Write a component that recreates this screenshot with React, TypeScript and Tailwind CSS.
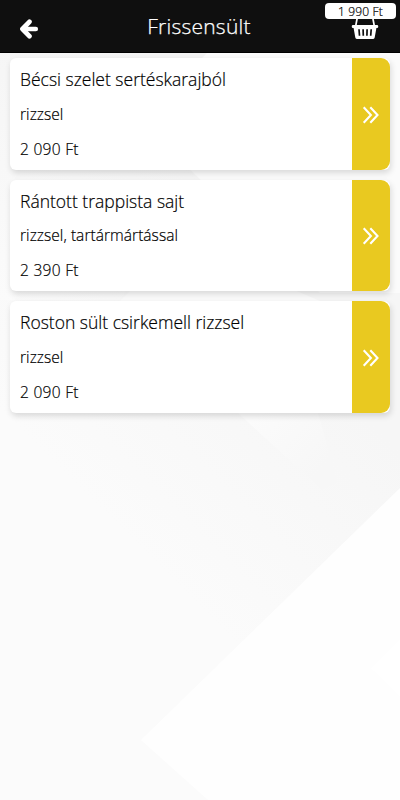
type Dish = {
  name: string;
  side: string;
  price: string;
};

const dishes: Dish[] = [
  {
    name: "Bécsi szelet sertéskarajból",
    side: "rizzsel",
    price: "2 090 Ft",
  },
  {
    name: "Rántott trappista sajt",
    side: "rizzsel, tartármártással",
    price: "2 390 Ft",
  },
  {
    name: "Roston sült csirkemell rizzsel",
    side: "rizzsel",
    price: "2 090 Ft",
  },
];

const BackIcon = () => (
  <svg width="20" height="20" viewBox="0 0 20 20" fill="none" stroke="white" aria-hidden="true">
    <path d="M10.4 2.8 3.5 10l6.900 7.200" strokeWidth="4.8" strokeLinecap="round" strokeLinejoin="round" />
    <path d="M4 10h12.800" strokeWidth="4.600" strokeLinecap="round" />
  </svg>
);

const BasketIcon = () => (
  <svg width="28" height="24" viewBox="0 0 28 24" aria-hidden="true">
    <path d="M4.700 10 6.200 2M23.300 10 21.800 2" stroke="white" strokeWidth="1.7" />
    <path
      fill="white"
      d="M2 9h24q1.200 0 1.200 1v1q0 1-1.200 1h-.6l-1.700 9.400q-.3 1.600-2 1.600H6.300q-1.700 0-2-1.600L2.600 12H2q-1.200 0-1.200-1v-1q0-1 1.200-1Z"
    />
    <path d="m8 13.300.5 6.400M12.100 13.300l.2 6.400M16.100 13.300l-.2 6.400M20.200 13.300l-.5 6.400" stroke="#0f0f0f" strokeWidth="1.7" />
  </svg>
);

const ChevronsIcon = () => (
  <svg width="18" height="18" viewBox="0 0 18 18" fill="none" stroke="white" strokeWidth="2.1" aria-hidden="true">
    <path d="m1.700 1.300 7.200 7.700-7.200 7.700M8.300 1.300l7.200 7.700-7.200 7.700" />
  </svg>
);

const Backdrop = () => (
  <svg className="absolute inset-0 h-full w-full" viewBox="0 0 400 800" aria-hidden="true">
    <defs>
      <linearGradient id="shade" gradientUnits="userSpaceOnUse" x1="150" y1="560" x2="330" y2="380">
        <stop offset="0" stopColor="#fbfbfb" />
        <stop offset="1" stopColor="#f6f6f6" />
      </linearGradient>
      <linearGradient id="top" gradientUnits="userSpaceOnUse" x1="0" y1="300" x2="180" y2="80">
        <stop offset="0" stopColor="#fbfbfb" />
        <stop offset="1" stopColor="#f3f3f3" />
      </linearGradient>
      <linearGradient id="streak" gradientUnits="userSpaceOnUse" x1="255" y1="413" x2="320" y2="470">
        <stop offset="0" stopColor="#fbfbfb" />
        <stop offset="1" stopColor="#f7f7f7" />
      </linearGradient>
    </defs>
    <path fill="url(#shade)" d="M0 0h400v800H0Z" />
    <path fill="url(#top)" d="M0 0h260L140 122l60 58-80 120H0Z" />
    <path fill="#fbfbfb" d="M207 53h193v240h-80L140 122Z" />
    <path fill="#fbfbfb" d="m120 301 60-60 140 60Z" />
    <path fill="url(#streak)" d="M238 413h80l20 70-16 7Z" />
    <path fill="#fefefe" d="M400 488v312H208l-67-60Z" />
    <path fill="#ffffff" d="m400 640-29 29 29 28Z" />
  </svg>
);

const DishCard = ({ dish }: { dish: Dish }) => (
  <button className="flex h-[111.5px] w-full overflow-hidden rounded-md bg-white text-left shadow-[1px_3px_6px_rgba(0,0,0,0.14)]">
    <div className="flex-1 pt-2 pl-[10px] font-light whitespace-nowrap text-black [-webkit-text-stroke:0.2px_black]">
      <h2 className="text-[17.5px] leading-[26px]">{dish.name}</h2>
      <p className="mt-[9.5px] text-[15.5px] leading-[24px] tracking-[0.05px]">{dish.side}</p>
      <p className="mt-[11px] text-[15.5px] leading-[24px] tracking-[0.3px]">{dish.price}</p>
    </div>
    <div className="flex w-[38px] items-center justify-center self-stretch rounded-r-[9px] bg-[#e9c920] pt-[2px]">
      <ChevronsIcon />
    </div>
  </button>
);

export default function App() {
  return (
    <div className="relative h-[800px] w-[400px] overflow-hidden bg-[#fbfbfb] font-['Open_Sans','Noto_Sans',sans-serif]">
      <Backdrop />
      <header className="relative flex h-[53px] items-center justify-between border-b border-black bg-[#0f0f0f] pr-[21px] pl-[19px]">
        <button className="mt-[5px] w-[28px]">
          <BackIcon />
        </button>
        <h1 className="pt-[2px] text-[21px] font-light tracking-[0.25px] text-white [-webkit-text-stroke:0.25px_white]">
          Frissensült
        </h1>
        <button className="mt-1">
          <BasketIcon />
        </button>
        <span className="absolute top-[3px] right-[4px] flex h-4 w-[71px] items-center justify-center rounded bg-white pt-px text-[12px] font-light text-black [-webkit-text-stroke:0.2px_black] tracking-[0.15px]">
          1 990 Ft
        </span>
      </header>
      <main className="relative flex flex-col gap-[10px] px-[10px] pt-[5px]">
        {dishes.map((dish) => (
          <DishCard key={dish.name} dish={dish} />
        ))}
      </main>
    </div>
  );
}
